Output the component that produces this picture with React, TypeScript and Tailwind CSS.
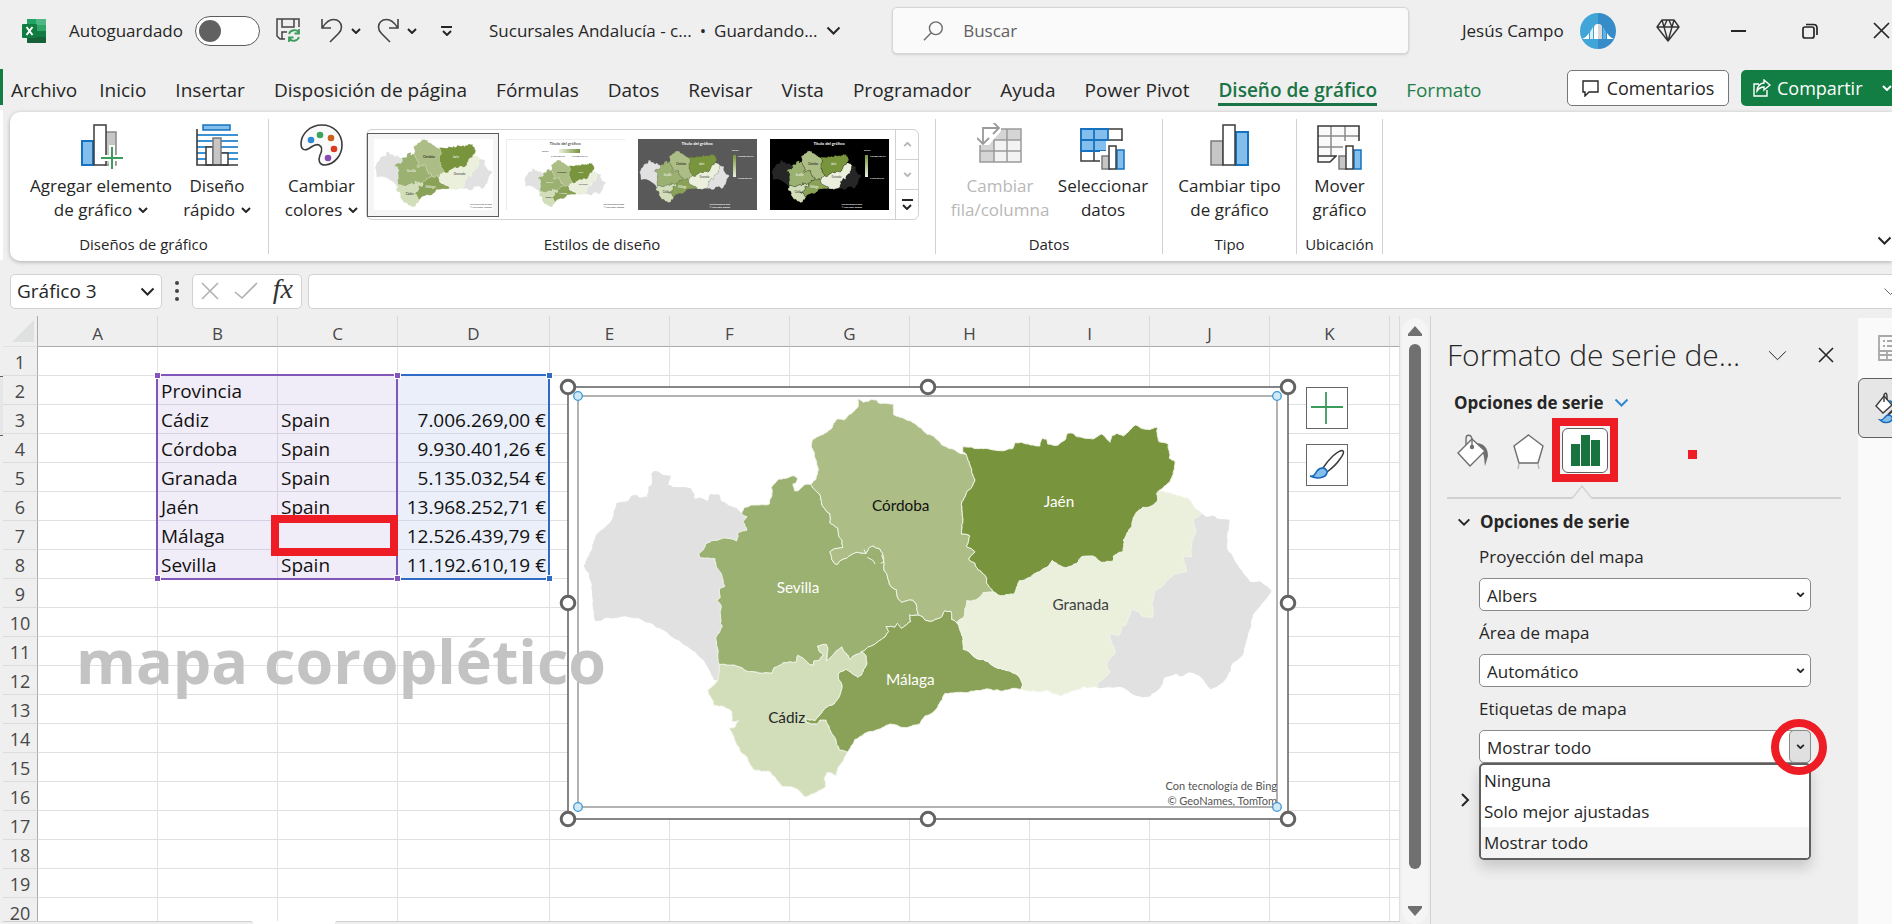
import React from "react";

type Pt = [number, number];

/* ---------- Map geometry ---------- */

const parse = (s: string): Pt[] =>
  s
    .trim()
    .split(/\s+/)
    .map((p) => p.split(",").map(Number) as Pt);

const shift = (pts: Pt[]): Pt[] => pts.map(([x, y]) => [x + 1140, y]);
const rev = (pts: Pt[]): Pt[] => [...pts].reverse();

const huelvaCoast = parse(
  "474,930 462,928 445,893 425,865 400,842 350,808 310,779 290,772 270,757 235,743 180,740 133,744 126,750 108,753 103,730 100,690 97,645 88,610 73,588 82,565 98,535 110,495 130,478 158,448 170,400 205,394 215,378 230,376 238,384 262,383 266,352 275,345 275,312 285,304 298,308 312,316 331,318 323,345 342,353 392,355 402,372 402,387 420,384 445,394 452,373 478,376 482,392 505,408 530,416 545,430",
);
const huelvaSevilla = parse(
  "545,430 561,440 549,455 561,480 535,486 530,513 516,507 490,504 455,512 437,521 431,538 417,551 420,563 465,566 470,592 484,612 494,650 478,656 481,682 470,690 484,710 481,760 487,768 468,800 474,850 478,883",
);
const huelvaCadiz = parse("478,883 474,930");
const sevillaNorth = parse(
  "545,430 555,412 575,405 628,402 636,375 634,352 655,328 675,325 702,317 713,325 709,338 699,342 703,362 715,362 737,343 752,344",
);
const sevillaCordoba = parse(
  "752,344 778,372 785,402 809,430 809,458 833,474 835,495 846,510 848,533 822,537 810,545 815,568 831,584 840,572 860,565 888,547 918,550 925,535 940,528 960,537 970,560 972,600 990,645 1010,660 1012,680 1025,697 1058,690 1068,700 1075,735",
);
const sevillaMalaga = parse(
  "1075,735 1048,735 1052,755 1024,775 1012,760 1004,772 978,770 986,785 972,803 940,825 905,845",
);
const sevillaCadiz = parse(
  "905,845 870,868 845,830 822,852 798,872 803,845 800,824 772,828 778,845 790,855 780,868 762,872 760,886 745,880 730,865 713,856 708,876 670,878 642,893 636,909 585,906 560,903 530,888 478,883",
);
const cadizMalaga = parse(
  "905,845 917,855 920,885 905,915 893,922 875,910 857,898 838,908 835,925 846,945 840,975 822,1002 795,1015 765,1052 735,1045 740,1057 770,1062 780,1050 798,1050 810,1080 826,1105 838,1140 862,1146",
);
const cadizCoast = parse(
  "862,1146 848,1175 835,1190 828,1217 812,1208 800,1208 792,1225 797,1250 775,1262 735,1281 705,1254 665,1248 628,1204 582,1200 560,1160 543,1147 525,1112 508,1075 524,1072 536,1052 516,1054 516,1026 492,1010 461,1005 443,960 474,930",
);
const cordobaNorth = parse(
  "752,344 768,328 775,300 763,255 754,232 757,210 785,195 815,175 830,147 852,150 895,108 895,86 910,97 935,88 950,90 954,98 985,101 1000,102 1002,135 1020,142 1055,155 1085,175 1100,192 1118,197 1145,225 1200,250 1218,252",
);
const cordobaJaen = shift(
  parse(
    "78,252 90,285 105,330 95,352 78,372 66,395 68,460 64,492 90,498 80,530 105,545 86,568 105,580 115,600 140,625 140,640 160,665",
  ),
);
const cordobaGranada = shift(parse("160,665 130,667 108,690 80,692 72,740 50,757"));
const cordobaMalaga = parse("1190,757 1175,748 1173,724 1155,722 1145,740 1120,752 1095,750 1088,740 1075,735");
const malagaGranada = shift(
  parse("50,757 64,790 70,838 84,843 108,865 130,868 160,888 205,902 235,917 247,940 244,957"),
);
const malagaCoast = parse(
  "1384,957 1365,955 1320,963 1275,958 1220,968 1155,970 1135,1005 1115,1030 1095,1038 1080,1062 1045,1072 990,1062 945,1082 915,1090 885,1108 862,1146",
);
const jaenNorth = shift(
  parse(
    "78,252 68,246 68,228 115,236 175,242 218,236 225,218 245,217 300,228 308,205 320,207 323,222 352,226 375,210 383,190 400,190 410,200 465,205 485,192 510,217 515,197 530,190 550,198 587,165 618,178 652,172 657,215 685,222 688,265 704,272 700,312 690,335 656,362",
  ),
);
const jaenGranada = shift(
  parse(
    "656,362 650,370 651,395 630,410 608,412 585,435 575,470 550,510 550,543 520,558 520,573 485,577 455,558 425,560 410,580 377,593 355,585 337,571 320,592 275,618 245,632 238,632 222,672 190,677 175,675 160,665",
  ),
);
const granadaEast = shift(parse("656,362 700,373 745,386 765,415 787,432"));
const granadaAlmeria = shift(
  parse(
    "787,432 760,448 766,490 755,520 755,560 730,558 740,605 700,615 645,662 636,700 637,744 605,738 595,725 572,716 558,765 545,772 535,797 510,792 515,820 527,848 500,882 510,908 473,937 473,952",
  ),
);
const granadaCoast = shift(parse("473,952 430,950 400,962 362,977 320,960 290,965 244,957"));
const almeriaCoast = shift(
  parse(
    "787,432 800,442 818,438 830,447 868,450 860,490 862,540 895,590 930,637 960,635 993,662 970,695 938,732 932,770 905,858 875,880 870,903 850,935 830,950 812,957 775,915 745,906 720,918 705,910 675,920 655,958 630,978 600,978 575,970 550,952 473,952",
  ),
);

/* Splits a segment at a displaced midpoint; the result is the same from either end. */
const roughen = (a: Pt, b: Pt, depth: number): Pt[] => {
  const len = Math.hypot(b[0] - a[0], b[1] - a[1]);
  if (depth === 0 || len < 8) return [a];
  const fwd = a[0] < b[0] || (a[0] === b[0] && a[1] < b[1]);
  const [p, q] = fwd ? [a, b] : [b, a];
  const h = Math.sin(p[0] * 12.9898 + p[1] * 78.233 + q[0] * 37.719 + q[1] * 9.151) * 43758.5453;
  const d = (h - Math.floor(h) - 0.5) * Math.min(0.22, 5 / len);
  const m: Pt = [(p[0] + q[0]) / 2 - (q[1] - p[1]) * d, (p[1] + q[1]) / 2 + (q[0] - p[0]) * d];
  return [...roughen(a, m, depth - 1), ...roughen(m, b, depth - 1)];
};

const outline = (...parts: Pt[][]): string => {
  const pts = parts.flat();
  const out: Pt[] = [];
  pts.forEach((p, i) => out.push(...roughen(p, pts[(i + 1) % pts.length], 3)));
  return "M" + out.map(([x, y]) => `${x.toFixed(1)} ${y.toFixed(1)}`).join("L") + "Z";
};

const regions = [
  { fill: "", d: outline(huelvaCoast, huelvaSevilla, huelvaCadiz) },
  { fill: "", d: outline(almeriaCoast, rev(granadaAlmeria)) },
  { fill: "#d2deba", d: outline(sevillaCadiz, huelvaCadiz, rev(cadizCoast), rev(cadizMalaga)) },
  {
    fill: "#9bb171",
    d: outline(sevillaNorth, sevillaCordoba, sevillaMalaga, sevillaCadiz, rev(huelvaSevilla)),
  },
  {
    fill: "#8aa257",
    d: outline(rev(sevillaMalaga), rev(cordobaMalaga), malagaGranada, malagaCoast, rev(cadizMalaga)),
  },
  {
    fill: "#ebf0dd",
    d: outline(granadaEast, granadaAlmeria, granadaCoast, rev(malagaGranada), rev(cordobaGranada), rev(jaenGranada)),
  },
  {
    fill: "#acbd86",
    d: outline(cordobaNorth, cordobaJaen, cordobaGranada, cordobaMalaga, rev(sevillaCordoba)),
  },
  { fill: "#78943c", d: outline(jaenNorth, jaenGranada, rev(cordobaJaen)) },
];

const labels = [
  { name: "Córdoba", x: 1022, y: 423, fill: "#111111" },
  { name: "Sevilla", x: 714, y: 668, fill: "#ffffff" },
  { name: "Málaga", x: 1051, y: 945, fill: "#ffffff" },
  { name: "Cádiz", x: 680, y: 1058, fill: "#262626" },
  { name: "Jaén", x: 1497, y: 410, fill: "#ffffff" },
  { name: "Granada", x: 1562, y: 719, fill: "#404040" },
];

function MapShapes({ empty = "#e1e1e1", edge = "#f0f3e8", size = 46 }: { empty?: string; edge?: string; size?: number }) {
  return (
    <g fontFamily="Lato, 'Noto Sans', sans-serif">
      {regions.map((r, i) => (
        <path key={i} d={r.d} fill={r.fill || empty} stroke={r.fill ? edge : empty} strokeWidth="3" strokeLinejoin="round" />
      ))}
      <path d="M922 562L940 572L945 582M965 555L972 575L962 580M912 538L918 552" fill="none" stroke={edge} strokeWidth="3" />
      {labels.map((l) => (
        <text key={l.name} x={l.x} y={l.y} fill={l.fill} fontSize={size} textAnchor="middle">
          {l.name}
        </text>
      ))}
    </g>
  );
}

/* ---------- Small icons ---------- */

function Chevron({ w = 10, stroke = 2, color = "#262626", up = false }: { w?: number; stroke?: number; color?: string; up?: boolean }) {
  const h = Math.round(w * 0.6);
  return (
    <svg width={w} height={h} viewBox="0 0 10 6" fill="none" stroke={color} strokeWidth={(stroke * 10) / w} className="inline-block shrink-0" aria-hidden>
      <path d={up ? "M1 5L5 1L9 5" : "M1 1L5 5L9 1"} />
    </svg>
  );
}

function ExcelLogo() {
  return (
    <svg width="24" height="24" viewBox="0 0 24 24" aria-hidden>
      <rect x="5" y="0" width="19" height="24" rx="1" fill="#21a366" />
      <rect x="5" y="0" width="10" height="6" fill="#21a366" />
      <rect x="14" y="0" width="10" height="6" fill="#4fb783" />
      <rect x="5" y="6" width="10" height="6" fill="#107c41" />
      <rect x="14" y="6" width="10" height="6" fill="#33a468" />
      <rect x="5" y="12" width="19" height="6" fill="#185c37" />
      <rect x="14" y="12" width="10" height="6" fill="#107c41" />
      <rect x="5" y="18" width="19" height="6" rx="1" fill="#17613a" />
      <rect x="0" y="5" width="15" height="14" rx="1" fill="#107c41" />
      <path d="M4.500 8L10.500 16M10.500 8L4.500 16" stroke="#fff" strokeWidth="2" />
    </svg>
  );
}

function SaveIcon() {
  return (
    <svg width="25" height="25" viewBox="0 0 25 25" fill="none" stroke="#444" strokeWidth="1.500" aria-hidden>
      <path d="M9 21H4L1 18V1H23V9M6 1V9H18V1M6 21V14H11" />
      <path d="M13 16a5.500 5.500 0 0 1 10-1M23 11v4.500h-4.500M23 19a5.500 5.500 0 0 1-10 1M13 24v-4.500h4.500" stroke="#3c9c5c" strokeWidth="1.800" />
    </svg>
  );
}

function UndoIcon({ flip = false }: { flip?: boolean }) {
  return (
    <svg width="22" height="25" viewBox="0 0 22 25" fill="none" stroke="#444" strokeWidth="1.600" className={flip ? "-scale-x-100" : ""} aria-hidden>
      <path d="M1 1V10H10M1.500 9.500C5 4 8.500 1.500 12.500 1.500C17.500 1.500 20.500 5 20.500 9C20.500 11.500 19.500 13.500 17.500 15.500L9 24" />
    </svg>
  );
}

function Avatar() {
  return (
    <svg width="36" height="36" viewBox="0 0 36 36" aria-hidden>
      <defs>
        <clipPath id="av">
          <circle cx="18" cy="18" r="18" />
        </clipPath>
      </defs>
      <g clipPath="url(#av)">
        <rect width="18" height="36" fill="#41a5d8" />
        <rect x="18" width="18" height="36" fill="#358cc8" />
        <path d="M2 26C5 25 7 23 9 20V26Z" fill="#fff" />
        <path d="M34 26C31 25 29 23 27 20V26Z" fill="#fff" />
        <path d="M10 26V19L13 14V26Z" fill="#d8edf8" />
        <path d="M26 26V19L23 14V26Z" fill="#5db4e4" />
        <path d="M14 26V15a4 4 0 0 1 8 0V26Z" fill="#fff" />
        <path d="M18 11a4 4 0 0 1 4 4V26H18Z" fill="#d7d7da" />
      </g>
    </svg>
  );
}

function MiniBars() {
  return (
    <g>
      <path d="M20 47V28H26V18H43V47Z" fill="#fff" />
      <rect x="22" y="33" width="8" height="13" fill="#c8c6c4" stroke="#7a7a7a" strokeWidth="1.500" />
      <rect x="37" y="27" width="7" height="19" fill="#83beec" stroke="#1572be" strokeWidth="1.500" />
      <rect x="29" y="23" width="7" height="23" fill="#fff" stroke="#3b3b3b" strokeWidth="1.500" />
    </g>
  );
}

function AddElementIcon() {
  return (
    <svg width="46" height="47" viewBox="0 0 46 47" aria-hidden>
      <rect x="27" y="9" width="11" height="33" fill="#c8c6c4" stroke="#8a8886" strokeWidth="1.500" />
      <rect x="4" y="18" width="11" height="24" fill="#83beec" stroke="#1572be" strokeWidth="2" />
      <rect x="16" y="2" width="12" height="40" fill="#fff" stroke="#3b3b3b" strokeWidth="1.500" />
      <path d="M34 22V46M22 35H46" stroke="#fff" strokeWidth="6" />
      <path d="M34 24V46M23 35H45" stroke="#3c9c5c" strokeWidth="2" />
    </svg>
  );
}

function LayoutIcon() {
  return (
    <svg width="46" height="47" viewBox="0 0 46 47" aria-hidden>
      <path d="M3 12H44M3 18H44M3 24H44M3 30H44M3 36H44" stroke="#3b93d6" strokeWidth="2" />
      <rect x="9" y="2" width="27" height="5" fill="#83beec" stroke="#1572be" strokeWidth="1.500" />
      <rect x="12" y="24" width="7" height="18" fill="#fff" stroke="#3b3b3b" strokeWidth="1.500" />
      <rect x="26" y="30" width="8" height="12" fill="#fff" stroke="#3b3b3b" strokeWidth="1.500" />
      <rect x="19" y="15" width="8" height="27" fill="#c8c6c4" stroke="#7a7a7a" strokeWidth="1.500" />
      <path d="M3 6V42H44" fill="none" stroke="#3b3b3b" strokeWidth="1.600" />
    </svg>
  );
}

function PaletteIcon() {
  return (
    <svg width="46" height="47" viewBox="0 0 46 47" aria-hidden>
      <path
        d="M23 2C11 2 2 11 2 21C2 26 5 28 9 26C13 24 16 20 20 22C24 24 23 28 21 32C19 37 20 42 26 42C36 41 43 32 43 22C43 10 34 2 23 2Z"
        fill="#fafafa"
        stroke="#3b3b3b"
        strokeWidth="1.600"
      />
      <circle cx="12" cy="17" r="3.300" fill="#2f8ad0" />
      <circle cx="21" cy="12" r="3.300" fill="#3ba55d" />
      <circle cx="32" cy="15" r="3.300" fill="#c8621d" />
      <circle cx="35" cy="26" r="3.300" fill="#dd3b1f" />
      <circle cx="29" cy="35" r="3.300" fill="#8a4bb0" />
    </svg>
  );
}

function SwitchRowIcon() {
  return (
    <svg width="46" height="47" viewBox="0 0 46 47" aria-hidden>
      <rect x="3" y="6" width="41" height="33" fill="#f3f3f3" />
      <path d="M3 6H44V17H17V39H3Z" fill="#d5d5d5" />
      <path d="M3 6H44V39H3ZM17 6V39M30 6V39M3 17H44M3 28H44" fill="none" stroke="#9a9a9a" strokeWidth="1.500" />
      <path d="M0 0H24V8L12 22H0Z" fill="#fff" />
      <path d="M16 -1L22 5L16 11M22 5H6V21M0 15L6 21L12 15" fill="none" stroke="#9a9a9a" strokeWidth="1.800" />
    </svg>
  );
}

function SelectDataIcon() {
  return (
    <svg width="46" height="47" viewBox="0 0 46 47" aria-hidden>
      <rect x="1" y="6" width="41" height="32" fill="#fff" stroke="#3b3b3b" strokeWidth="1.500" />
      <path d="M14 28V38M28 28V38M28 17H42" stroke="#3b3b3b" strokeWidth="1.500" />
      <rect x="1" y="6" width="27" height="22" fill="#83beec" />
      <path d="M1 6H28V28H1ZM14 6V28M1 17H28" fill="none" stroke="#1572be" strokeWidth="1.800" />
      <MiniBars />
    </svg>
  );
}

function ChartTypeIcon() {
  return (
    <svg width="46" height="47" viewBox="0 0 46 47" aria-hidden>
      <rect x="4" y="18" width="12" height="24" fill="#c8c6c4" stroke="#7a7a7a" strokeWidth="1.500" />
      <rect x="29" y="9" width="12" height="33" fill="#83beec" stroke="#1572be" strokeWidth="2" />
      <rect x="16" y="2" width="12" height="40" fill="#fff" stroke="#3b3b3b" strokeWidth="1.500" />
    </svg>
  );
}

function MoveChartIcon() {
  return (
    <svg width="46" height="47" viewBox="0 0 46 47" aria-hidden>
      <path d="M1 3H42V33H19L13 39H1Z" fill="#fafafa" />
      <path d="M14 3V33M28 3V33M1 13H42M1 24H42" stroke="#8a8a8a" strokeWidth="1.500" />
      <path d="M42 26V3H1V39H13L19 33H1" fill="none" stroke="#3b3b3b" strokeWidth="1.600" />
      <MiniBars />
    </svg>
  );
}

/* ---------- Title bar and tabs ---------- */

function TitleBar() {
  return (
    <header className="flex h-[60px] shrink-0 items-center pt-px text-[17px]">
      <div className="flex w-[889px] shrink-0 items-center pl-[19px]">
        <ExcelLogo />
        <label htmlFor="autosave" className="ml-[23px]">
          Autoguardado
        </label>
        <span className="relative ml-3 h-[30px] w-[65px]">
          <input id="autosave" type="checkbox" className="size-full appearance-none rounded-full border-[1.500px] border-[#5c5c5c] bg-white" />
          <span className="pointer-events-none absolute top-1 left-[4px] size-[22px] rounded-full bg-[#616161]" />
        </span>
        <button aria-label="Guardar" className="ml-4">
          <SaveIcon />
        </button>
        <button aria-label="Deshacer" className="ml-5 flex items-center gap-2">
          <UndoIcon />
          <Chevron w={10} />
        </button>
        <button aria-label="Rehacer" className="ml-4 flex items-center gap-2">
          <UndoIcon flip />
          <Chevron w={10} />
        </button>
        <button aria-label="Personalizar barra" className="ml-6 flex flex-col items-center gap-[2px]">
          <span className="h-[2px] w-[11px] bg-[#262626]" />
          <Chevron w={10} />
        </button>
        <button className="ml-[37px] flex items-center whitespace-nowrap">
          <span>Sucursales Andalucía - c...</span>
          <span className="mx-2">•</span>
          <span>Guardando...</span>
          <span className="ml-2 flex">
            <Chevron w={15} />
          </span>
        </button>
      </div>
      <div className="flex h-[47px] min-w-40 flex-1 items-center rounded-[5px] border border-[#d6d6d6] bg-[#fafafa] pl-[30px] shadow-sm">
        <svg width="22" height="22" viewBox="0 0 22 22" fill="none" stroke="#6a6a6a" strokeWidth="1.500" aria-hidden>
          <circle cx="14" cy="8" r="7" />
          <path d="M9 13L1 21" />
        </svg>
        <input aria-label="Buscar" placeholder="Buscar" className="ml-5 w-full bg-transparent outline-none placeholder:text-[#616161]" />
      </div>
      <div className="flex w-[483px] shrink-0 items-center pl-[53px]">
        <span className="w-[106px] whitespace-nowrap">Jesús Campo</span>
        <button aria-label="Cuenta" className="ml-3">
          <Avatar />
        </button>
        <button aria-label="Premium" className="ml-10">
          <svg width="24" height="23" viewBox="0 0 24 23" fill="none" stroke="#333" strokeWidth="1.400" strokeLinejoin="round" aria-hidden>
            <path d="M6 1H18L23 8L12 22L1 8ZM1 8H23M6 1L8 8L12 22L16 8L18 1M8 8L11 1M16 8L13 1" />
          </svg>
        </button>
        <button aria-label="Minimizar" className="ml-[51px] flex h-5 items-center">
          <span className="h-[2px] w-[15px] bg-[#262626]" />
        </button>
        <button aria-label="Restaurar" className="ml-[56px]">
          <svg width="16" height="16" viewBox="0 0 16 16" fill="none" stroke="#262626" strokeWidth="1.700" aria-hidden>
            <rect x="1" y="4" width="11" height="11" rx="2" />
            <path d="M4 1.500H11.500Q15 1.500 15 5V12" />
          </svg>
        </button>
        <button aria-label="Cerrar" className="ml-[55px]">
          <svg width="17" height="17" viewBox="0 0 17 17" stroke="#262626" strokeWidth="1.700" aria-hidden>
            <path d="M1 1L16 16M16 1L1 16" />
          </svg>
        </button>
      </div>
    </header>
  );
}

const tabs = ["Insertar", "Disposición de página", "Fórmulas", "Datos", "Revisar", "Vista", "Programador", "Ayuda", "Power Pivot"];

function TabBar() {
  return (
    <nav className="flex h-[52px] shrink-0 items-center pt-1 pl-2 text-[18px] whitespace-nowrap">
      <div className="flex flex-1 items-center gap-[29px] pt-1 text-[19px] leading-[26px]">
        <div className="flex gap-[22px]">
          <button>Archivo</button>
          <button>Inicio</button>
        </div>
        {tabs.map((t) => (
          <button key={t}>{t}</button>
        ))}
        <button className="border-y-[3px] border-t-transparent border-b-[#1a7445] font-semibold text-[#1a7445]">Diseño de gráfico</button>
        <button className="text-[#1f7f4b]">Formato</button>
      </div>
      <div className="flex items-center gap-3">
        <button className="flex h-9 w-[162px] items-center justify-center gap-2 rounded-[5px] border border-[#767676] bg-white">
          <svg width="17" height="17" viewBox="0 0 17 17" fill="none" stroke="#262626" strokeWidth="1.400" aria-hidden>
            <path d="M1 1H16V12H7L3 16V12H1Z" />
          </svg>
          Comentarios
        </button>
        <button className="flex h-9 w-[151px] items-center rounded-l-[5px] bg-[#127e43] pl-3 font-medium text-white">
          <svg width="18" height="18" viewBox="0 0 18 18" fill="none" stroke="#fff" strokeWidth="1.400" aria-hidden>
            <path d="M6 5H1V17H14V11M11 1L17 6L11 11V8C8 8 6 9 4 12C4 8 7 4 11 4Z" />
          </svg>
          <span className="ml-[6px]">Compartir</span>
          <span className="ml-auto flex">
            <Chevron w={10} color="#fff" />
          </span>
        </button>
      </div>
    </nav>
  );
}

/* ---------- Ribbon ---------- */

function RibbonButton({ icon, lines, width, menu, disabled }: { icon: React.ReactNode; lines: [string, string]; width: string; menu?: boolean; disabled?: boolean }) {
  return (
    <button disabled={disabled} className={`${width} flex shrink-0 flex-col items-center pt-[11px] text-[17px] leading-6 whitespace-nowrap ${disabled ? "text-[#b8b8b8]" : ""}`}>
      {icon}
      <span className="mt-1">{lines[0]}</span>
      <span className="flex items-center gap-[6px]">
        {lines[1]}
        {menu && <Chevron w={10} />}
      </span>
    </button>
  );
}

function Group({ label, width, children }: { label: string; width: string; children: React.ReactNode }) {
  return (
    <section className={`${width} my-[7px] flex shrink-0 flex-col border-r border-[#d1d1d1]`}>
      <div className="-mt-[7px] flex h-[124px]">{children}</div>
      <div className="text-center text-[15px] leading-5">{label}</div>
    </section>
  );
}

function ThumbPlain() {
  return (
    <svg width="119" height="71" viewBox="55 80 2095 1250" className="bg-white" aria-label="Estilo 1">
      <MapShapes size={56} />
      <g fontSize="38" fontWeight="bold" fill="#666" textAnchor="end" fontFamily="Lato, sans-serif">
        <text x="2130" y="1240">Con tecnología de Bing</text>
        <text x="2130" y="1292">© GeoNames, TomTom</text>
      </g>
    </svg>
  );
}

function ThumbTitled({ id, bg, fg, empty, horizontal }: { id: string; bg: string; fg: string; empty: string; horizontal?: boolean }) {
  const creditX = horizontal ? 118 : 92;
  return (
    <svg width="119" height="71" viewBox="0 0 119 71" aria-label={id}>
      <defs>
        <linearGradient id={id} x1="0" y1={horizontal ? "0" : "1"} x2={horizontal ? "1" : "0"} y2="0">
          <stop offset="0" stopColor="#ebf0dd" />
          <stop offset="1" stopColor="#78943c" />
        </linearGradient>
      </defs>
      <rect width="119" height="71" fill={bg} />
      {horizontal && <path d="M.5 71V.5H119" fill="none" stroke="#ededed" />}
      <g transform={horizontal ? "translate(15.500 17.500) scale(.0395)" : "translate(-1.500 8) scale(.0435)"}>
        <MapShapes empty={empty} edge={bg} size={62} />
      </g>
      <g fill={fg} fontFamily="Lato, sans-serif" fontWeight="bold" fontSize="2.400">
        <text x="59" y="5.500" fontSize="4.200" textAnchor="middle">
          Título del gráfico
        </text>
        {horizontal ? (
          <>
            <text x="36" y="13">Serie1</text>
            <rect x="53" y="10" width="21" height="4" fill={`url(#${id})`} />
            <text x="45" y="17.500">5.135.032,54</text>
            <text x="66" y="17.500">13.968.252,71</text>
          </>
        ) : (
          <>
            <text x="94" y="12">Serie1</text>
            <rect x="95" y="16" width="3" height="22" fill={`url(#${id})`} />
            <text x="100" y="17.500">13.968.252,71</text>
            <text x="100" y="39.500">5.135.032,54</text>
          </>
        )}
        <text x={creditX} y="66" textAnchor="end" fontSize="2">Con tecnología de Bing</text>
        <text x={creditX} y="69" textAnchor="end" fontSize="2">© GeoNames, TomTom</text>
      </g>
    </svg>
  );
}

function Gallery() {
  return (
    <div className="mt-[17px] -ml-2 flex h-[91px] rounded-[6px] border border-[#d1d1d1]">
      <div className="flex items-center">
        <button className="flex h-[84px] w-[132px] items-center justify-center border border-[#5c5c5c] bg-[#f5f5f5]">
          <ThumbPlain />
        </button>
        <button className="flex w-[132px] justify-center">
          <ThumbTitled id="estilo-2" bg="#ffffff" fg="#555555" empty="#e1e1e1" horizontal />
        </button>
        <button className="flex w-[132px] justify-center">
          <ThumbTitled id="estilo-3" bg="#595959" fg="#ffffff" empty="#e1e1e1" />
        </button>
        <button className="flex w-[132px] justify-center">
          <ThumbTitled id="estilo-4" bg="#000000" fg="#ffffff" empty="#262626" />
        </button>
      </div>
      <div className="flex w-[23px] flex-col divide-y divide-[#d1d1d1] border-l border-[#d1d1d1]">
        <button aria-label="Anterior" className="flex flex-1 items-center justify-center">
          <Chevron w={9} color="#b5b5b5" up />
        </button>
        <button aria-label="Siguiente" className="flex flex-1 items-center justify-center">
          <Chevron w={9} color="#b5b5b5" />
        </button>
        <button aria-label="Más" className="flex flex-1 flex-col items-center justify-center gap-[3px]">
          <span className="h-[2px] w-[11px] bg-[#262626]" />
          <Chevron w={10} />
        </button>
      </div>
    </div>
  );
}

function Ribbon() {
  return (
    <div className="ml-[7px] flex h-[149px] shrink-0 rounded-l-[10px] bg-white shadow-[0_1px_4px_rgba(0,0,0,0.28)]">
      <Group label="Diseños de gráfico" width="w-[259px] pl-[9px]">
        <RibbonButton icon={<AddElementIcon />} lines={["Agregar elemento", "de gráfico"]} width="w-[164px]" menu />
        <RibbonButton icon={<LayoutIcon />} lines={["Diseño", "rápido"]} width="w-[68px]" menu />
      </Group>
      <Group label="Estilos de diseño" width="w-[667px]">
        <RibbonButton icon={<PaletteIcon />} lines={["Cambiar", "colores"]} width="w-[105px]" menu />
        <Gallery />
      </Group>
      <Group label="Datos" width="w-[227px]">
        <RibbonButton icon={<SwitchRowIcon />} lines={["Cambiar", "fila/columna"]} width="w-[128px]" disabled />
        <RibbonButton icon={<SelectDataIcon />} lines={["Seleccionar", "datos"]} width="w-[78px]" />
      </Group>
      <Group label="Tipo" width="w-[134px]">
        <RibbonButton icon={<ChartTypeIcon />} lines={["Cambiar tipo", "de gráfico"]} width="w-[133px]" />
      </Group>
      <Group label="Ubicación" width="w-[86px]">
        <RibbonButton icon={<MoveChartIcon />} lines={["Mover", "gráfico"]} width="w-[85px]" />
      </Group>
      <button aria-label="Contraer la cinta" className="mt-auto mb-4 ml-auto flex">
        <Chevron w={15} />
      </button>
    </div>
  );
}

function FormulaBar() {
  return (
    <div className="flex h-[55px] shrink-0 items-center pt-[5px] pl-[7px] text-[19px]">
      <div className="flex h-[35px] w-[152px] items-center rounded-[5px] border border-[#d1d1d1] bg-white px-[6px]">
        <input aria-label="Cuadro de nombres" defaultValue="Gráfico 3" className="w-full min-w-0 bg-transparent outline-none" />
        <Chevron w={15} />
      </div>
      <span className="mx-[13px] flex flex-col gap-1">
        <span className="size-1 rounded-full bg-[#444]" />
        <span className="size-1 rounded-full bg-[#444]" />
        <span className="size-1 rounded-full bg-[#444]" />
      </span>
      <div className="flex h-[35px] w-[110px] items-center justify-between rounded-[5px] border border-[#d1d1d1] bg-white px-2">
        <svg width="18" height="18" viewBox="0 0 18 18" stroke="#b0b0b0" strokeWidth="1.600" aria-hidden>
          <path d="M1 1L17 17M17 1L1 17" />
        </svg>
        <svg width="24" height="18" viewBox="0 0 24 18" fill="none" stroke="#b0b0b0" strokeWidth="1.600" aria-hidden>
          <path d="M1 10L8 16L23 1" />
        </svg>
        <button aria-label="Insertar función" className="pb-1 font-['Liberation_Serif',serif] text-[28px] leading-none text-[#333] italic">
          fx
        </button>
      </div>
      <div className="-mr-[6px] ml-[6px] flex h-[35px] flex-1 items-center rounded-l-[5px] border border-r-0 border-[#d1d1d1] bg-white">
        <input aria-label="Barra de fórmulas" className="w-full bg-transparent px-2 outline-none" />
        <Chevron w={15} stroke={1} color="#666" />
      </div>
    </div>
  );
}

/* ---------- Worksheet ---------- */

const columns = ["A", "B", "C", "D", "E", "F", "G", "H", "I", "J", "K", ""];
const data: Record<number, [string, string, string]> = {
  2: ["Provincia", "", ""],
  3: ["Cádiz", "Spain", "7.006.269,00 €"],
  4: ["Córdoba", "Spain", "9.930.401,26 €"],
  5: ["Granada", "Spain", "5.135.032,54 €"],
  6: ["Jaén", "Spain", "13.968.252,71 €"],
  7: ["Málaga", "", "12.526.439,79 €"],
  8: ["Sevilla", "Spain", "11.192.610,19 €"],
};
const rows = Array.from({ length: 20 }, (_, i) => i + 1);

function SheetTable() {
  return (
    <table className="w-full table-fixed border-separate border-spacing-0">
      <colgroup>
        <col className="w-[35px]" />
        <col className="w-[120px]" />
        <col className="w-[120px]" />
        <col className="w-[120px]" />
        <col className="w-[152px]" />
        <col className="w-[120px]" />
        <col className="w-[120px]" />
        <col className="w-[120px]" />
        <col className="w-[120px]" />
        <col className="w-[120px]" />
        <col className="w-[120px]" />
        <col className="w-[120px]" />
        <col />
      </colgroup>
      <thead>
        <tr className="h-[31px] text-[17px] leading-6 text-[#474747]">
          <th className="border-r border-b border-[#ababab] border-b-[#e0e0e0] p-0 align-bottom">
            <svg width="22" height="22" viewBox="0 0 22 22" className="mb-1 ml-[9px]" aria-hidden>
              <path d="M22 0V22H0Z" fill="#dfe1e1" />
            </svg>
          </th>
          {columns.map((c, i) => (
            <th key={i} className="border-r border-b border-[#d9d9d9] border-b-[#ababab] p-0 pt-[6px] font-normal">
              {c}
            </th>
          ))}
        </tr>
      </thead>
      <tbody>
        {rows.map((r) => {
          const d = data[r];
          return (
            <tr key={r} className="h-[29px] leading-6">
              <th className="border-r border-b border-[#ababab] border-b-[#dcdcdc] p-0 pt-[2px] text-[18px] font-normal text-[#474747]">{r}</th>
              {columns.map((c, i) => {
                const inRange = d && i >= 1 && i <= 3;
                const tone = !inRange ? "border-[#e0e0e0] bg-white" : i === 3 ? "border-[#d3dbe8] bg-[#eaeff9] text-right" : "border-[#d4d1e2] bg-[#f1edf8]";
                return (
                  <td key={i} className={`border-r border-b p-0 px-[3px] pt-[2px] text-[19px] whitespace-nowrap text-[#111] ${tone}`}>
                    {inRange ? d[i - 1] : ""}
                  </td>
                );
              })}
            </tr>
          );
        })}
      </tbody>
    </table>
  );
}

function RangeOutline() {
  return (
    <svg className="pointer-events-none absolute top-[55px] left-[150px]" width="400" height="212" viewBox="0 0 400 212" aria-hidden>
      <rect x="244" y="4" width="152" height="204" fill="none" stroke="#2f6bc4" strokeWidth="2" />
      <rect x="4" y="4" width="240" height="204" fill="none" stroke="#8156b8" strokeWidth="2" />
      <g fill="#8156b8" stroke="#fff">
        <rect x="1.500" y="1.500" width="6" height="6" />
        <rect x="241.500" y="1.500" width="6" height="6" />
        <rect x="1.500" y="204.500" width="6" height="6" />
        <rect x="241.500" y="204.500" width="6" height="6" />
      </g>
      <g fill="#2f6bc4" stroke="#fff">
        <rect x="393.500" y="1.500" width="6" height="6" />
        <rect x="393.500" y="204.500" width="6" height="6" />
      </g>
    </svg>
  );
}

function Chart() {
  const outer = [
    [0, 0],
    [360, 0],
    [720, 0],
    [0, 216],
    [720, 216],
    [0, 432],
    [360, 432],
    [720, 432],
  ];
  const inner = [
    [10, 9],
    [709, 9],
    [10, 420],
    [709, 420],
  ];
  return (
    <div className="absolute top-[71px] left-[565px] flex gap-[18px]">
      <svg width="720" height="432" viewBox="0 0 720 432" className="shrink-0 overflow-visible" role="img" aria-label="Mapa de Andalucía por provincias">
        <rect width="720" height="432" fill="#fff" stroke="#5f5f5f" strokeWidth="1.500" />
        <rect x="10" y="9" width="699" height="411" fill="#fff" stroke="#9a9a9a" strokeWidth="1.500" />
        <g transform="translate(-8 -17) scale(.33333)">
          <MapShapes />
        </g>
        <g fontFamily="Lato, 'Noto Sans', sans-serif" fontSize="11" fill="#555" textAnchor="end">
          <text x="709" y="403">Con tecnología de Bing</text>
          <text x="709" y="418">© GeoNames, TomTom</text>
        </g>
        {outer.map(([x, y]) => (
          <circle key={`${x}-${y}`} cx={x} cy={y} r="6.800" fill="#fff" stroke="#636363" strokeWidth="3" />
        ))}
        {inner.map(([x, y]) => (
          <circle key={`${x}-${y}`} cx={x} cy={y} r="4.300" fill="#cfe9f7" stroke="#3d97d3" strokeWidth="1.300" />
        ))}
      </svg>
      <div className="flex flex-col gap-[15px]">
        <button aria-label="Elementos de gráfico" className="flex size-[42px] items-center justify-center border border-[#666] bg-white">
          <svg width="32" height="32" viewBox="0 0 32 32" stroke="#3c9c5c" strokeWidth="1.800" aria-hidden>
            <path d="M15 0V32M0 15H32" />
          </svg>
        </button>
        <button aria-label="Estilos de gráfico" className="flex size-[42px] items-center justify-center border border-[#666] bg-white">
          <svg width="36" height="32" viewBox="0 0 36 32" aria-hidden>
            <path d="M14 19C20 10 28 2 33 1.500C36 2 34 6 31 10C27 16 22 20 18 23Z" fill="#fff" stroke="#3b3b3b" strokeWidth="1.500" />
            <path d="M1 27C5 28 6 25 8 22C11 18 16 18 18 22C19 28 10 31 1 27Z" fill="#83beec" stroke="#1566b8" strokeWidth="1.500" />
          </svg>
        </button>
      </div>
    </div>
  );
}

function Sheet() {
  return (
    <div className="flex min-w-0 flex-1 flex-col">
      <div className="relative min-h-0 flex-1 overflow-hidden">
        <SheetTable />
        <RangeOutline />
        <div className="pointer-events-none absolute top-[199px] left-[268px] h-[41px] w-[127px] border-8 border-[#ee1c25]" />
        <Chart />
        <p className="pointer-events-none absolute top-[305px] left-[73px] text-[61px] leading-[80px] font-bold whitespace-nowrap text-[#c3c3c3]">mapa coroplético</p>
      </div>
      <div className="flex h-[3px] shrink-0 bg-white">
        <span className="w-[250px] rounded-tr border-t border-[#cfcfcf] bg-[#efefef]" />
        <span className="ml-[82px] flex-1 rounded-tl border-t border-[#cfcfcf] bg-[#efefef]" />
      </div>
    </div>
  );
}

function ScrollBar() {
  return (
    <div className="flex w-[30px] shrink-0 flex-col items-center pt-[2px]">
      <div className="flex w-[26px] flex-1 flex-col items-center rounded-full bg-[#f5f5f5] pt-2 pb-2">
        <svg width="14" height="10" viewBox="0 0 14 10" aria-hidden>
          <path d="M7 0L14 8V10H0V8Z" fill="#707070" />
        </svg>
        <div className="mt-2 h-[525px] w-3 rounded-full bg-[#707070]" />
        <svg width="14" height="10" viewBox="0 0 14 10" className="mt-auto" aria-hidden>
          <path d="M7 10L14 2V0H0V2Z" fill="#707070" />
        </svg>
      </div>
    </div>
  );
}

/* ---------- Format pane ---------- */

function Field({ id, label, options, value, open }: { id: string; label: string; options: string[]; value: string; open?: boolean }) {
  return (
    <div className="mb-[10px] ml-8 w-[332px]">
      <label htmlFor={id} className="block leading-6">
        {label}
      </label>
      <div className="relative mt-[9px]">
        <select id={id} defaultValue={value} className="h-[33px] w-full appearance-none rounded-[5px] border border-[#8a8a8a] bg-white px-[7px] pt-[2px] outline-none">
          {options.map((o) => (
            <option key={o}>{o}</option>
          ))}
        </select>
        <span
          className={
            open
              ? "pointer-events-none absolute inset-y-0 right-0 flex w-[22px] items-center justify-center rounded-[5px] border border-[#8a8a8a] bg-[#e0e0e0]"
              : "pointer-events-none absolute inset-y-0 right-0 flex w-[22px] items-center justify-center"
          }
        >
          <Chevron w={9} />
        </span>
        {open && (
          <>
            <ul role="listbox" aria-label={label} className="absolute top-[33px] left-0 w-full overflow-hidden rounded-[5px] border-2 border-[#5f5f5f] bg-white shadow-[0_8px_14px_rgba(0,0,0,0.16)]">
              {options.map((o) => (
                <li key={o} role="option" aria-selected={o === value} className={o === value ? "h-[31px] bg-[#f4f4f4] px-[3px] leading-8" : "h-[31px] px-[3px] leading-8"}>
                  {o}
                </li>
              ))}
            </ul>
            <span className="pointer-events-none absolute -top-[11px] -right-[16px] size-[56px] rounded-full border-8 border-[#ee1c25]" />
          </>
        )}
      </div>
    </div>
  );
}

function FormatPane() {
  return (
    <aside className="w-[428px] shrink-0 border-l border-[#d1d1d1] pt-4 pl-4 text-[17px] text-[#262626]">
      <div className="flex h-[46px] items-center">
        <h2 className="w-[320px] pb-[2px] text-[30px] font-light whitespace-nowrap">Formato de serie de...</h2>
        <button aria-label="Opciones del panel" className="flex">
          <Chevron w={21} stroke={1} />
        </button>
        <button aria-label="Cerrar panel" className="ml-[30px]">
          <svg width="16" height="16" viewBox="0 0 16 16" stroke="#262626" strokeWidth="1.600" aria-hidden>
            <path d="M1 1L15 15M15 1L1 15" />
          </svg>
        </button>
      </div>
      <button className="mt-3 ml-[7px] flex h-6 items-center gap-[10px] pt-px font-bold">
        Opciones de serie
        <Chevron w={15} color="#2f8ad0" />
      </button>
      <div className="mt-1 flex h-16 items-center">
        <button aria-label="Relleno y línea" className="ml-[10px]">
          <svg width="33" height="33" viewBox="0 0 33 33" aria-hidden>
            <path d="M18 9C28 9 31 15 31 22L28 32C27 25 28 19 22 14Z" fill="#6e6e6e" />
            <path d="M15 5L28 17L13 32L1 19Z" fill="#fff" stroke="#6e6e6e" strokeWidth="1.400" />
            <path d="M9 11V5C9 0 14 0 15 5V13" fill="none" stroke="#6e6e6e" strokeWidth="1.400" />
            <circle cx="15" cy="13" r="2.200" fill="#6e6e6e" />
          </svg>
        </button>
        <button aria-label="Efectos" className="ml-[23px] pt-1">
          <svg width="31" height="36" viewBox="0 0 31 36" aria-hidden>
            <path d="M15.500 1L30 12L25 29H6L1 12Z" fill="#fff" stroke="#6e6e6e" strokeWidth="1.400" />
            <path d="M6 30L5 35M25 30L26 35" stroke="#bdbdbd" strokeWidth="1.500" />
          </svg>
        </button>
        <button aria-label="Opciones de serie" className="ml-2 flex h-16 w-[66px] items-center justify-center border-8 border-[#ee1c25] bg-[#f4f4f4]">
          <span className="flex h-[45px] w-[46px] items-center justify-center rounded-[6px] border border-[#5f5f5f] bg-white">
            <svg width="29" height="31" viewBox="0 0 29 31" aria-hidden>
              <path d="M0 9H9V31H0ZM10 0H19V31H10ZM20 5H29V31H20Z" fill="#18733f" />
            </svg>
          </span>
        </button>
        <span className="mt-2 ml-[70px] size-[9px] bg-[#ee1c25]" />
      </div>
      <div className="mt-[3px] flex h-[14px] items-end text-[#d1d1d1]">
        <span className="h-[2px] w-[125px] bg-current" />
        <svg width="20" height="14" viewBox="0 0 20 14" fill="none" stroke="currentColor" strokeWidth="1.300" aria-hidden>
          <path d="M0 13.500L10 1L20 13.500" />
        </svg>
        <span className="h-[2px] w-[249px] bg-current" />
      </div>
      <button className="mt-[11px] ml-[10px] flex h-6 items-center gap-[9px] font-bold">
        <Chevron w={14} />
        Opciones de serie
      </button>
      <div className="pt-[11px]">
        <Field id="proy" label="Proyección del mapa" value="Albers" options={["Albers", "Mercator", "Miller", "Robinson"]} />
        <Field id="area" label="Área de mapa" value="Automático" options={["Automático", "Mundo"]} />
        <Field id="etiq" label="Etiquetas de mapa" value="Mostrar todo" options={["Ninguna", "Solo mejor ajustadas", "Mostrar todo"]} open />
      </div>
      <button aria-label="Color de serie" className="mt-[30px] ml-[14px] block">
        <svg width="9" height="14" viewBox="0 0 9 14" fill="none" stroke="#262626" strokeWidth="2" aria-hidden>
          <path d="M1 1L7 7L1 13" />
        </svg>
      </button>
    </aside>
  );
}

function PaneRail() {
  return (
    <div className="mt-[2px] flex w-[34px] shrink-0 flex-col overflow-hidden bg-[#fafafa]">
      <button aria-label="Campos" className="mt-[17px] ml-5 h-[26px] w-7">
        <svg width="28" height="26" viewBox="0 0 28 26" fill="none" stroke="#a8a8a8" strokeWidth="1.800" aria-hidden>
          <path d="M1 1H27V25H1ZM1 16H27M1 20H27M9 16V25M5 6H7M5 11H7M9 6H27M9 11H27" />
        </svg>
      </button>
      <button aria-label="Formato" className="mt-[17px] h-[60px] w-[60px] rounded-[6px] border border-[#5f5f5f] bg-[#e6e6e6] pl-4">
        <svg width="30" height="32" viewBox="0 0 30 32" aria-hidden>
          <path d="M9 4L17 13L8 21L1 14Z" fill="#fff" stroke="#3b3b3b" strokeWidth="1.400" />
          <path d="M9 10V3C10 0 12 1 12 4V8" fill="none" stroke="#3b3b3b" strokeWidth="1.400" />
          <path d="M14 8C18 8 20 12 20 16L16 11Z" fill="#1572be" />
          <path d="M13 23L22 14" stroke="#3b3b3b" strokeWidth="2" />
          <path d="M5 28C9 29 9 24 13 23C16 23 18 25 17 28C14 32 8 31 5 28Z" fill="#83beec" stroke="#1566b8" strokeWidth="1.400" />
        </svg>
      </button>
    </div>
  );
}

export default function App() {
  return (
    <div className="flex h-screen overflow-hidden bg-[#efefef] font-['Open_Sans','Noto_Sans',sans-serif] text-[#262626]">
      <div className="flex w-[3px] shrink-0 flex-col pt-[69px]">
        <span className="h-9 bg-[#127e43]" />
        <span className="mt-[5px] h-[150px] bg-white" />
        <span className="mt-[116px] h-[60px] border-y border-[#5f5f5f] bg-[#e6e6e6]" />
      </div>
      <div className="flex min-w-0 flex-1 flex-col">
        <TitleBar />
        <TabBar />
        <Ribbon />
        <FormulaBar />
        <main className="flex min-h-0 flex-1">
          <Sheet />
          <ScrollBar />
          <FormatPane />
          <PaneRail />
        </main>
      </div>
    </div>
  );
}
